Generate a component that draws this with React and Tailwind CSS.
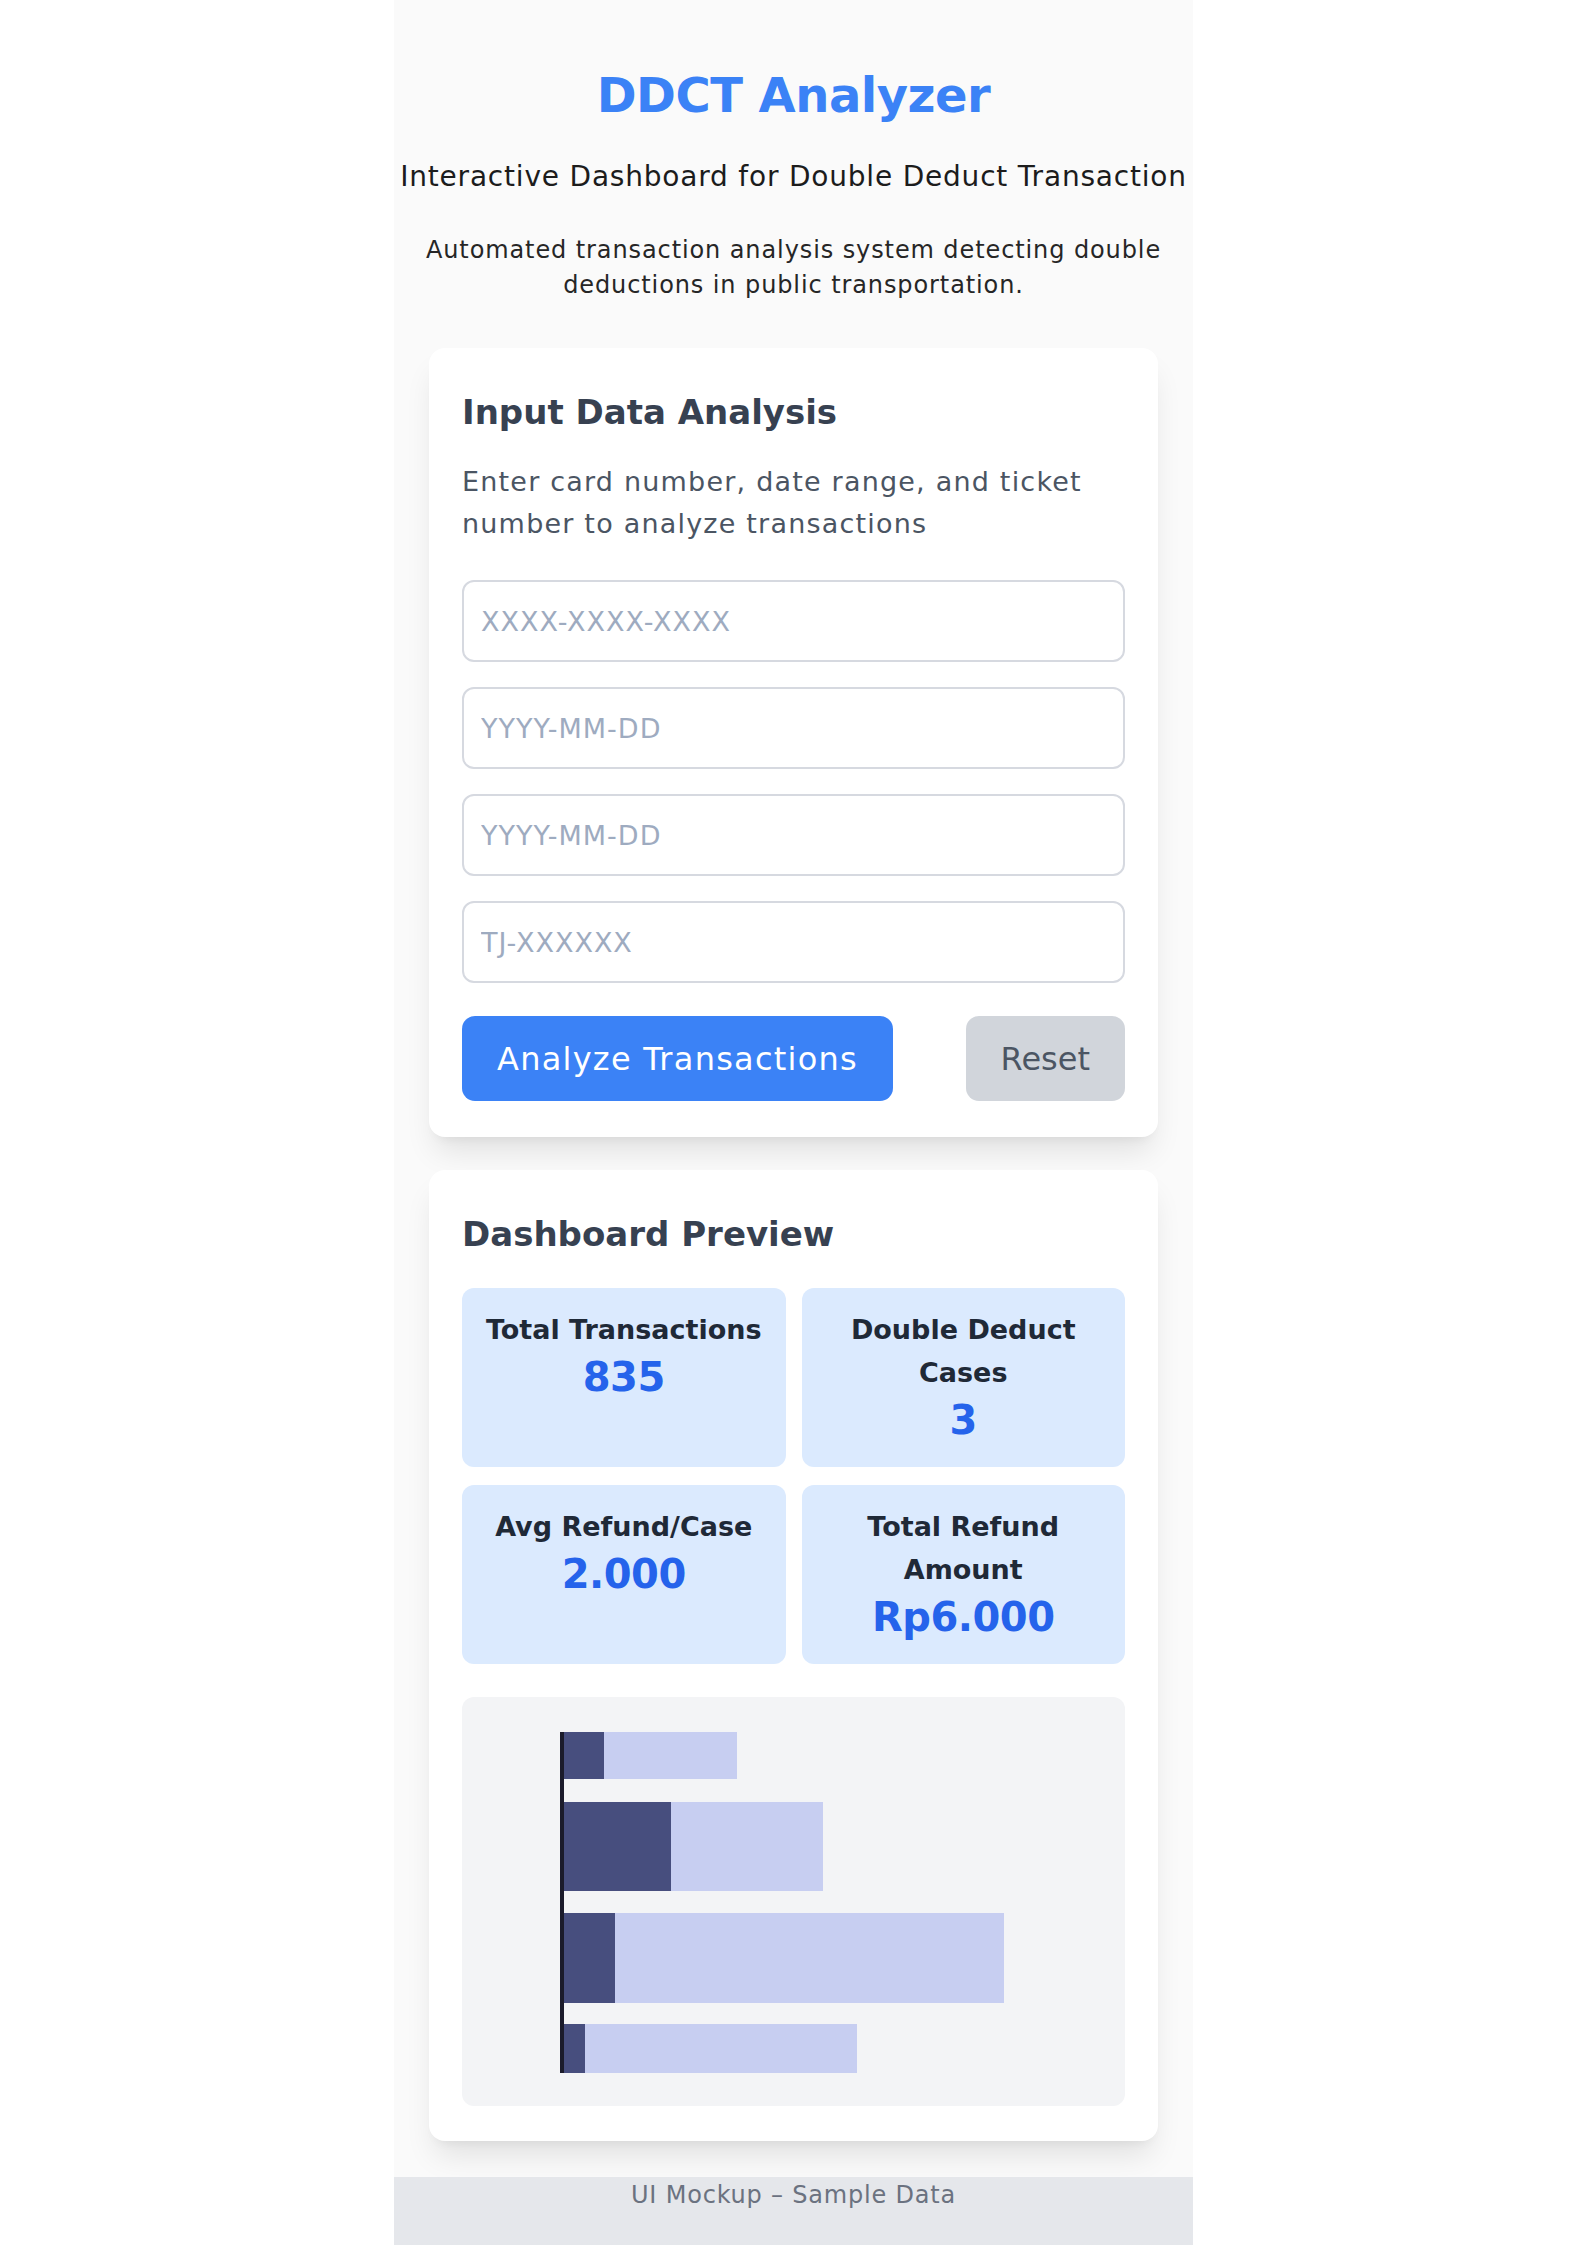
import React from "react";

const stats = [
  { label: "Total Transactions", value: "835" },
  { label: "Double Deduct Cases", value: "3" },
  { label: "Avg Refund/Case", value: "2.000" },
  { label: "Total Refund Amount", value: "Rp6.000" },
];

// horizontal stacked bars, coords inside the chart box
const bars = [
  { y: 35, h: 47, dark: 42, light: 133 },
  { y: 105, h: 89, dark: 109, light: 152 },
  { y: 216, h: 90, dark: 53, light: 389 },
  { y: 327, h: 49, dark: 23, light: 272 },
];

export default function App() {
  return (
    <div className="min-h-screen bg-white flex justify-center font-['DejaVu_Sans',sans-serif]">
      <div className="w-[799px] bg-[#fafafa] flex flex-col">
        {/* header */}
        <div className="pt-[65px] text-center">
          <h1 className="text-[48px] leading-[60px] font-bold text-[#3b82f6] tracking-[-0.5px]">
            DDCT Analyzer
          </h1>
          <p className="mt-[34px] text-[28px] leading-[36px] text-[#1c1c1c] whitespace-nowrap tracking-[0.8px]">
            Interactive Dashboard for Double Deduct Transaction
          </p>
          <p className="mt-[38px] mx-auto w-[745px] text-[24px] leading-[35px] text-[#262626] tracking-[0.9px]">
            Automated transaction analysis system detecting double deductions in public transportation.
          </p>
        </div>

        <div className="px-[35px] pt-[45px] flex flex-col gap-[33px]">
          {/* input card */}
          <div className="bg-white rounded-[16px] px-[33px] pt-[40px] pb-[36px] shadow-[0_20px_30px_-6px_rgba(0,0,0,0.1),0_8px_12px_-8px_rgba(0,0,0,0.08)]">
            <h2 className="text-[34px] leading-[48px] font-bold text-[#374151]">Input Data Analysis</h2>
            <p className="mt-[25px] text-[27px] leading-[42px] text-[#4b5563] tracking-[1.2px]">
              Enter card number, date range, and ticket number to analyze transactions
            </p>
            <form className="mt-[35px] flex flex-col gap-[25px]" onSubmit={(e) => e.preventDefault()}>
              <Field placeholder="XXXX-XXXX-XXXX" />
              <Field placeholder="YYYY-MM-DD" />
              <Field placeholder="YYYY-MM-DD" />
              <Field placeholder="TJ-XXXXXX" />
              <div className="mt-[8px] flex justify-between">
                <button
                  type="submit"
                  className="h-[85px] px-[35px] rounded-[13px] bg-[#3b82f6] text-white text-[32px] tracking-[1.25px]"
                >
                  Analyze Transactions
                </button>
                <button
                  type="button"
                  className="h-[85px] px-[35px] rounded-[13px] bg-[#d1d5db] text-[#4b5563] text-[32px]"
                >
                  Reset
                </button>
              </div>
            </form>
          </div>

          {/* dashboard card */}
          <div className="bg-white rounded-[16px] px-[33px] pt-[40px] pb-[35px] shadow-[0_20px_30px_-6px_rgba(0,0,0,0.1),0_8px_12px_-8px_rgba(0,0,0,0.08)]">
            <h2 className="text-[34px] leading-[48px] font-bold text-[#374151]">Dashboard Preview</h2>
            <div className="mt-[30px] grid grid-cols-2 gap-x-[16px] gap-y-[18px]">
              {stats.map((s) => (
                <div key={s.label} className="bg-[#dbeafe] rounded-[12px] px-[16px] py-[20px] text-center">
                  <div className="text-[27px] leading-[43px] font-bold text-[#1f2937]">{s.label}</div>
                  <div className="text-[40px] leading-[53px] font-bold text-[#2563eb] tracking-[-0.5px]">{s.value}</div>
                </div>
              ))}
            </div>
            <div className="mt-[33px] h-[409px] rounded-[12px] bg-[#f3f4f6]">
              <svg width="662" height="409" viewBox="0 0 662 409">
                {bars.map((b, i) => (
                  <g key={i}>
                    <rect x={100} y={b.y} width={b.dark} height={b.h} fill="#474e7e" />
                    <rect x={100 + b.dark} y={b.y} width={b.light} height={b.h} fill="#c7cef1" />
                  </g>
                ))}
                <rect x={98} y={35} width={4} height={341} fill="#1b1b2b" />
              </svg>
            </div>
          </div>
        </div>

        <div className="mt-[36px] h-[68px] bg-[#e5e7eb] text-center pt-[2px]">
          <p className="text-[24px] leading-[32px] text-[#6b7280] tracking-[0.8px]">UI Mockup – Sample Data</p>
        </div>
      </div>
    </div>
  );
}

function Field({ placeholder }) {
  return (
    <input
      type="text"
      placeholder={placeholder}
      className="h-[82px] w-full px-[17px] rounded-[12px] border-2 border-[#d6d9e0] bg-white text-[27px] tracking-[1px] text-[#374151] placeholder:text-[#9eabc0] outline-none"
    />
  );
}
